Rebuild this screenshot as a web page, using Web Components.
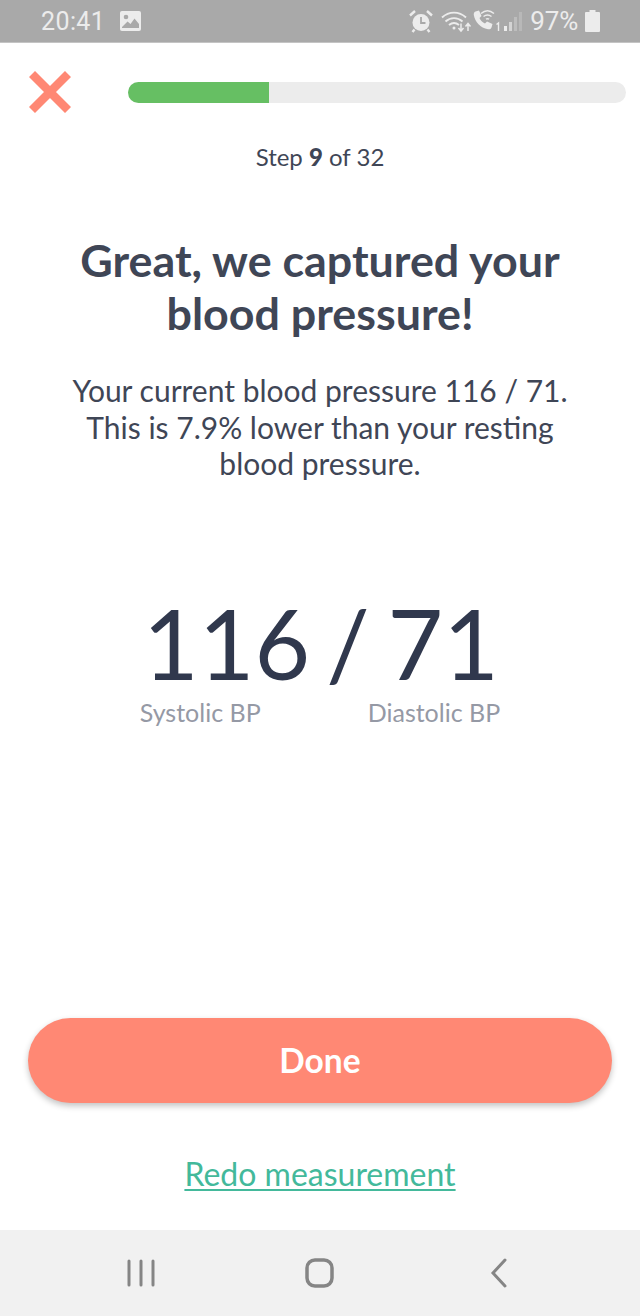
<!DOCTYPE html>
<html>
<head>
<meta charset="utf-8">
<style>
  html, body { margin:0; padding:0; background:#fff; }
  body { width:640px; height:1316px; font-family:Lato, sans-serif; overflow:hidden; }
  bp-screen { height:1316px; }
</style>
</head>
<body>
<bp-screen>
  <status-bar></status-bar>
  <progress-head step="9" total="32" percent="28.3"></progress-head>
  <h-intro>
    <span slot="title">Great, we captured your<br>blood pressure!</span>
    <span slot="text">Your current blood pressure 116 / 71.<br>This is 7.9% lower than your resting<br>blood pressure.</span>
  </h-intro>
  <bp-reading systolic="116" diastolic="71"></bp-reading>
  <bp-actions></bp-actions>
  <nav-bar></nav-bar>
</bp-screen>

<script>
class BpScreen extends HTMLElement {
  constructor() {
    super();
    this.attachShadow({mode:'open'}).innerHTML = `<style>
      :host { display:flex; flex-direction:column; width:640px; background:#fff; }
      ::slotted(bp-actions) { margin-top:auto; }
    </style><slot></slot>`;
  }
}

class StatusBar extends HTMLElement {
  constructor() {
    super();
    this.attachShadow({mode:'open'}).innerHTML = `<style>
      :host { display:flex; align-items:center; box-sizing:border-box; padding:0 40px 0 41px; background:#a9a9a9; color:#ececec; font:25px Roboto, sans-serif; border-bottom:1px solid #c4c4c4; height:43px; }
      .time { letter-spacing:.4px; }
      .pic { margin-left:15px; }
      .right { margin-left:auto; display:flex; align-items:center; }
      svg { display:block; }
      .pct { margin:0 7px 0 8px; font-size:26px; letter-spacing:-.2px; }
    </style>
    <span class="time">20:41</span>
    <svg class="pic" width="21" height="20" viewBox="0 0 21 20"><rect width="21" height="20" rx="2" fill="#ececec"/><circle cx="6" cy="6" r="2.3" fill="#a9a9a9"/><path d="M2 16 7.500 10.500 10.500 13 14.500 7.500 19 13V17H2Z" fill="#a9a9a9"/></svg>
    <div class="right">
      <svg width="24" height="24" viewBox="0 0 24 24" style="margin-right:8px"><circle cx="12" cy="13.500" r="8.500" fill="#ececec"/><path d="M12 8v6h4.500" fill="none" stroke="#a9a9a9" stroke-width="1.800"/><path d="M1 6.500 6 2M23 6.500 18 2M5.500 20.500 3.500 23M18.500 20.500 20.500 23" stroke="#ececec" stroke-width="2.400" fill="none"/></svg>
      <svg width="31" height="24" viewBox="0 0 31 24" fill="none" stroke="#ececec" stroke-width="1.900"><path d="M1 8.500C8 2 18 2 25 8.500M4.500 12.500C9.500 8 16.500 8 21.500 12.500M8 16C11 13.500 15 13.500 18 16"/><circle cx="13" cy="19" r="1.500" fill="#ececec" stroke="none"/><path d="M20 14.500v7M17.500 19l2.500 3 2.500-3M27 22v-7M24.500 17.500l2.500-3 2.500 3" stroke-width="1.500"/></svg>
      <svg width="29" height="24" viewBox="0 0 29 24"><path d="M3.500 2.500 7 1.500 9.500 7 7.500 9C8.500 11.500 10.500 13.500 13 14.500L15 12.500 20.500 15 19.500 18.500C19 20 17.500 20.500 16 20.300 8.500 19 3 13 1.800 6 1.600 4.500 2 3 3.500 2.500Z" fill="#ececec"/><g fill="none" stroke="#ececec" stroke-width="1.500"><path d="M9 4.500C13 1 18 1 22 4.500M11.500 7.500C14 5.500 17 5.500 19.500 7.500M14 10.200C15 9.500 16 9.500 17 10.200"/></g><path d="M24.500 15.500 26.500 14V22" fill="none" stroke="#ececec" stroke-width="1.400"/></svg>
      <svg width="19" height="24" viewBox="0 0 19 24" style="margin-left:2px"><rect x="1" y="17" width="3" height="5" fill="#ececec"/><rect x="6" y="13" width="3" height="9" fill="#d4d4d4"/><rect x="11" y="8" width="3" height="14" fill="#bdbdbd"/><rect x="16" y="3" width="3" height="19" fill="#b8b8b8"/></svg>
      <span class="pct">97%</span>
      <svg width="15" height="22" viewBox="0 0 15 22"><path d="M4.500 0H10.500V2H14A1 1 0 0 1 15 3V21A1 1 0 0 1 14 22H1A1 1 0 0 1 0 21V3A1 1 0 0 1 1 2H4.500Z" fill="#ececec"/></svg>
    </div>`;
  }
}

class ProgressHead extends HTMLElement {
  constructor() {
    super();
    const step = this.getAttribute('step'), total = this.getAttribute('total'), pct = this.getAttribute('percent');
    this.attachShadow({mode:'open'}).innerHTML = `<style>
      :host { display:block; color:#3f4656; }
      .row { display:flex; align-items:center; padding:27px 14px 0 29px; height:44px; }
      svg { display:block; flex:none; }
      .track { flex:1; height:21px; margin-left:57px; border-radius:11px; background:#ececec; overflow:hidden; }
      .fill { height:100%; background:#66bf63; }
      .label { text-align:center; font-size:24px; line-height:30px; margin-top:28px; }
      b { font-weight:900; }
    </style>
    <div class="row">
      <svg width="42" height="42" viewBox="0 0 42 42"><path d="M3 3 39 39M39 3 3 39" stroke="#ff8874" stroke-width="8.500" fill="none"/></svg>
      <div class="track"><div class="fill" style="width:${pct}%"></div></div>
    </div>
    <div class="label">Step <b>${step}</b> of ${total}</div>`;
  }
}

class HIntro extends HTMLElement {
  constructor() {
    super();
    this.attachShadow({mode:'open'}).innerHTML = `<style>
      :host { display:block; text-align:center; color:#3f4656; margin-top:62px; }
      .t { font-size:44.800px; font-weight:700; line-height:53px; }
      .p { font-size:30px; line-height:36.500px; margin-top:32px; }
    </style>
    <div class="t"><slot name="title"></slot></div>
    <div class="p"><slot name="text"></slot></div>`;
  }
}

class BpReading extends HTMLElement {
  constructor() {
    super();
    const s = this.getAttribute('systolic'), d = this.getAttribute('diastolic');
    this.attachShadow({mode:'open'}).innerHTML = `<style>
      :host { display:block; margin-top:111px; color:#30384d; }
      .num { display:flex; justify-content:center; font-size:96px; line-height:100px; padding-left:2px; }
      .num span:nth-child(2) { margin:0 18px 0 16px; }
      .labels { display:flex; justify-content:center; gap:107px; font-size:25px; line-height:30px; color:#9599a5; margin-top:4px; }
    </style>
    <div class="num"><span>${s}</span><span>/</span><span>${d}</span></div>
    <div class="labels"><span>Systolic BP</span><span>Diastolic BP</span></div>`;
  }
}

class BpActions extends HTMLElement {
  constructor() {
    super();
    this.attachShadow({mode:'open'}).innerHTML = `<style>
      :host { display:block; padding:0 28px; text-align:center; }
      .done { display:flex; align-items:center; justify-content:center; height:85px; border-radius:43px; background:#ff8874; color:#fff; font-size:33.500px; font-weight:700; box-shadow:0 3px 6px rgba(0,0,0,.24); padding-bottom:2px; box-sizing:border-box; }
      .redo { display:block; margin:53px 0 38px; font-size:32px; line-height:36px; color:#43b99b; text-decoration:underline; text-decoration-thickness:2px; text-underline-offset:3px; }
    </style>
    <div class="done">Done</div>
    <a class="redo">Redo measurement</a>`;
  }
}

class NavBar extends HTMLElement {
  constructor() {
    super();
    this.attachShadow({mode:'open'}).innerHTML = `<style>
      :host { display:flex; justify-content:center; align-items:center; height:86px; background:#f1f1f1; }
      .slot { width:179px; display:flex; justify-content:center; }
      svg { display:block; }
    </style>
    <div class="slot"><svg width="28" height="28" viewBox="0 0 28 28" stroke="#858585" stroke-width="3" stroke-linecap="round"><path d="M2 2V26M14 2V26M26 2V26"/></svg></div>
    <div class="slot"><svg width="30" height="30" viewBox="0 0 30 30" fill="none" stroke="#858585" stroke-width="3.500"><rect x="2" y="2" width="25" height="26" rx="8"/></svg></div>
    <div class="slot"><svg width="18" height="30" viewBox="0 0 18 30" fill="none" stroke="#858585" stroke-width="3" stroke-linecap="round"><path d="M15 2 3 15 15 28"/></svg></div>`;
  }
}

customElements.define('bp-screen', BpScreen);
customElements.define('status-bar', StatusBar);
customElements.define('progress-head', ProgressHead);
customElements.define('h-intro', HIntro);
customElements.define('bp-reading', BpReading);
customElements.define('bp-actions', BpActions);
customElements.define('nav-bar', NavBar);
</script>
</body>
</html>
